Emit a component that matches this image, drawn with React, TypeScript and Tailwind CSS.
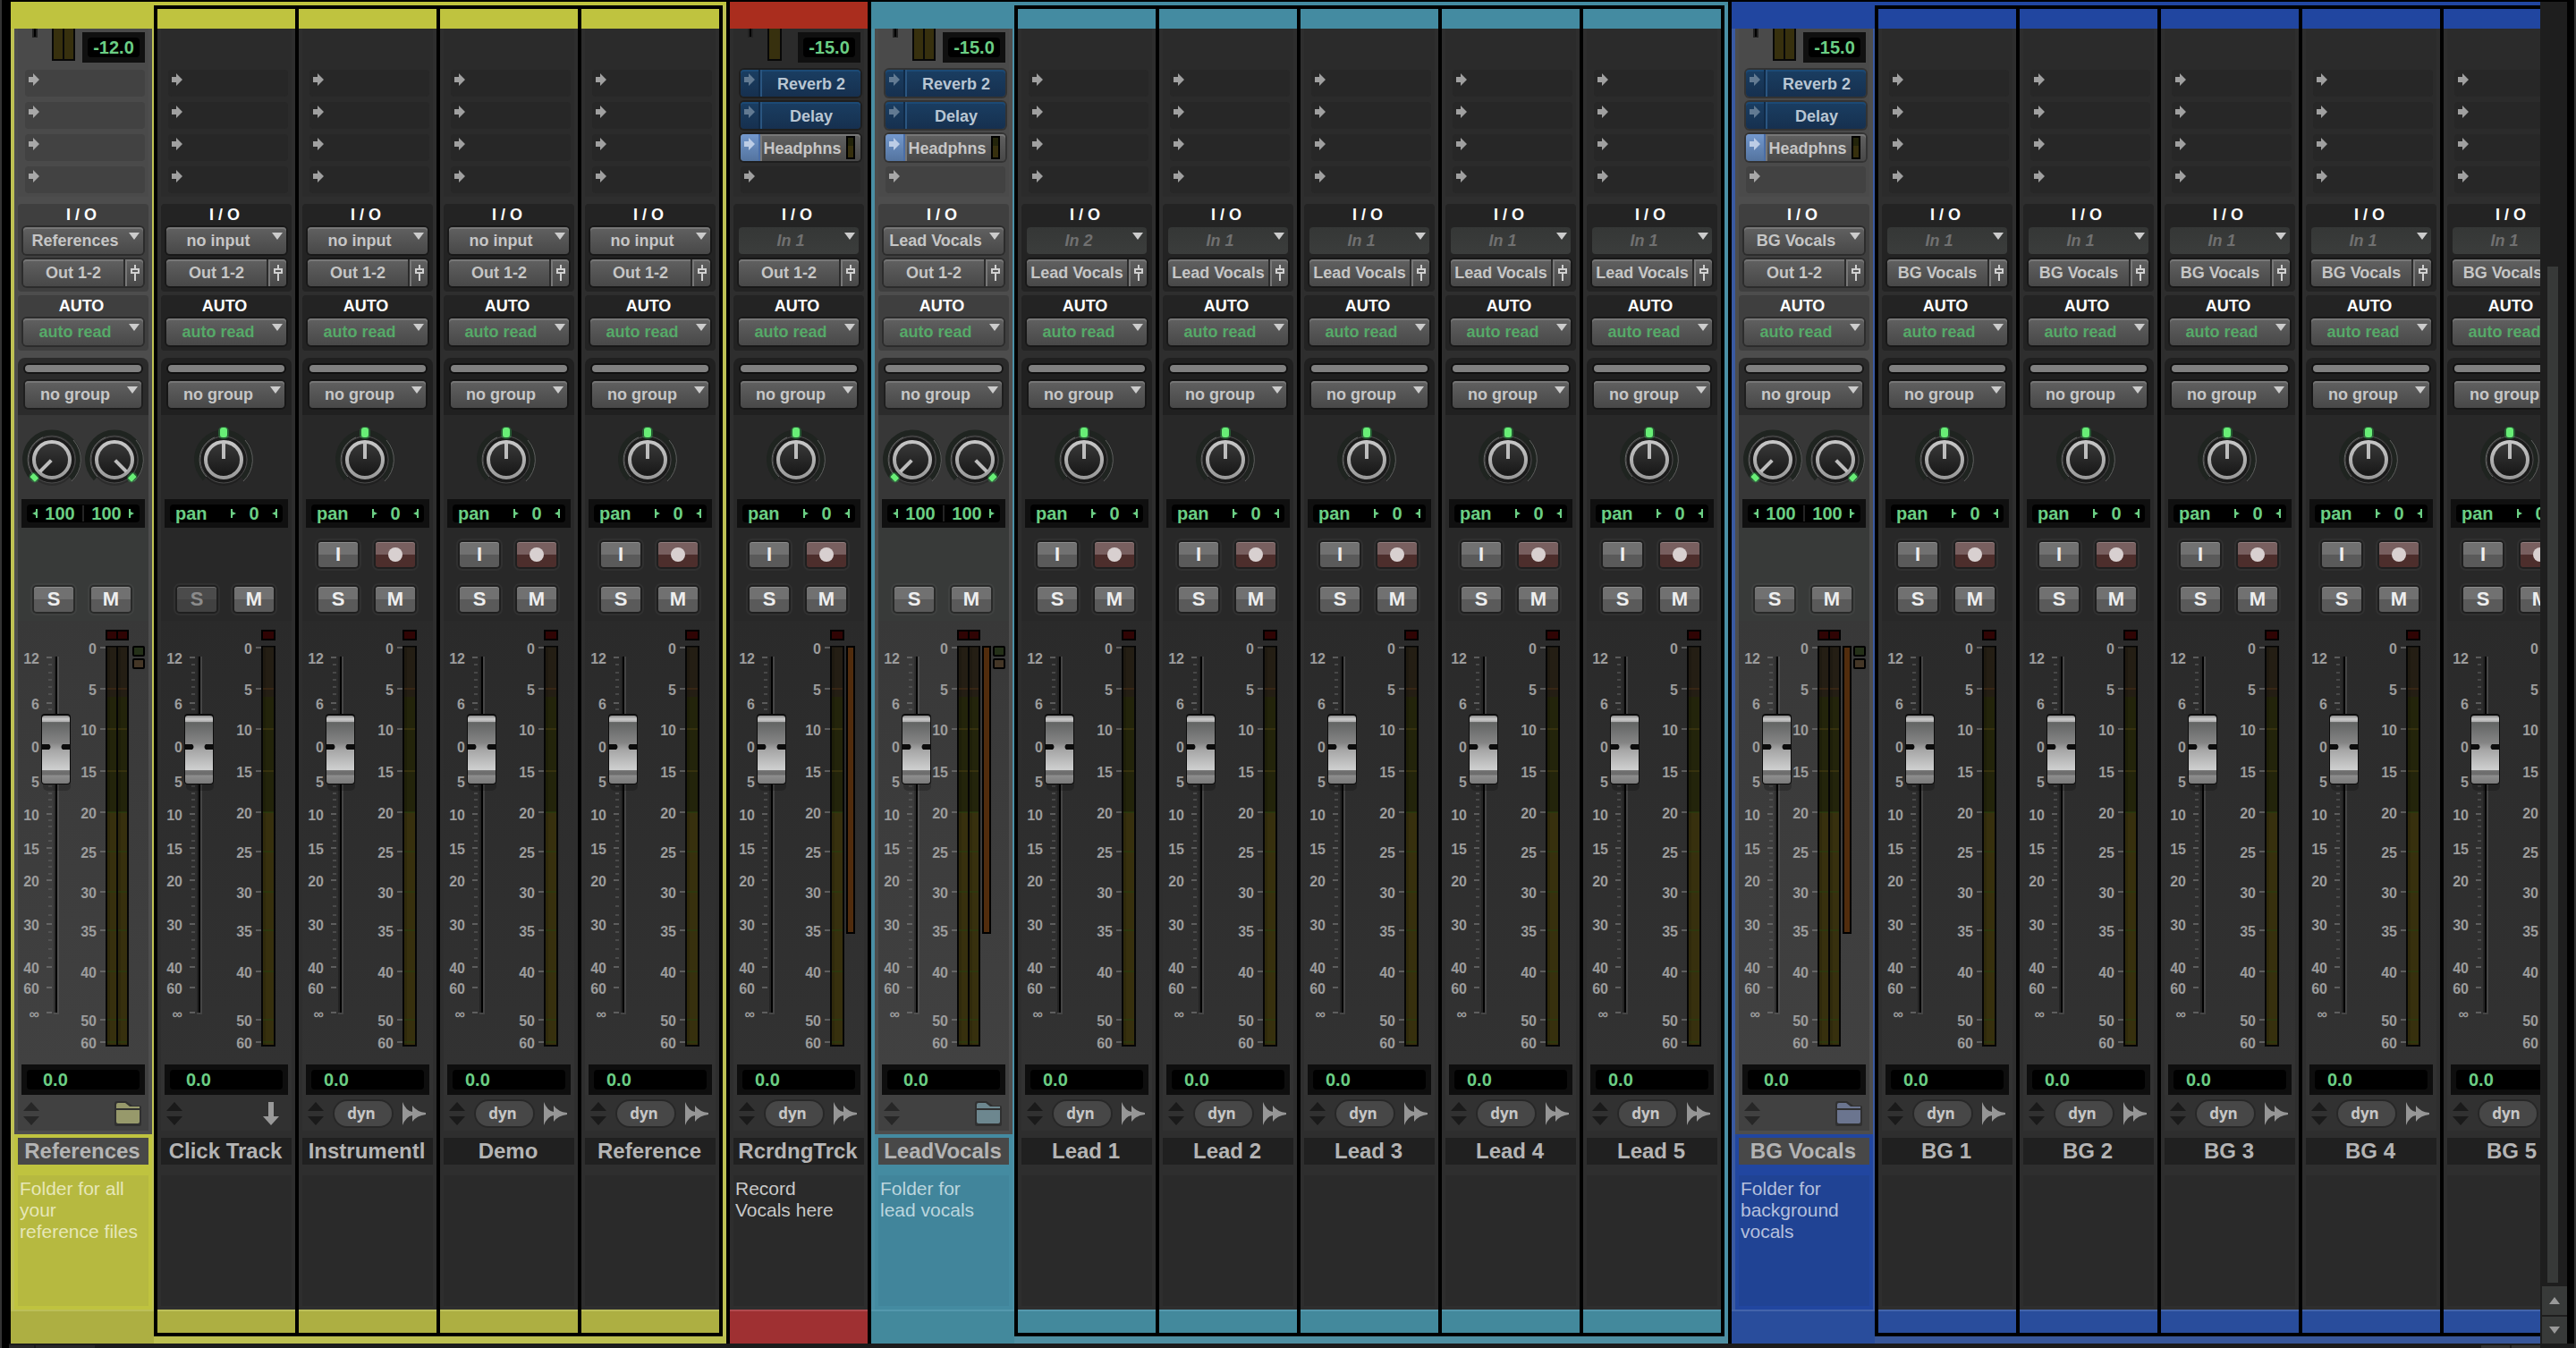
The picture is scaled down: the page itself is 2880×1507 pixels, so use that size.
import React, { useState } from 'react';
import clsx from 'clsx';

type ThemeName = 'yellow' | 'red' | 'teal' | 'blue';

interface Theme {
  main: string;
  side: string;
  bar: string;
  note: string;
  noteText: string;
  base: string;
  icon: string;
}

interface Track {
  name: string;
  input: string;
  output: string;
  kind: 'folder' | 'audio' | 'click';
  level?: string;
  note?: string;
}

interface TrackGroup {
  theme: ThemeName;
  folder: Track;
  tracks: Track[];
}

const THEMES: Record<ThemeName, Theme> = {
  yellow: {
    main: 'bg-[#bfc33f]',
    side: 'bg-[#bfc254]',
    bar: 'border-[#bcbf58] bg-[#adaf42]',
    note: 'bg-[#b6b940]',
    noteText: 'text-[#e6e7b8]',
    base: 'bg-[#bcbf50]',
    icon: 'text-[#97996b]',
  },
  red: {
    main: 'bg-[#aa2d1e]',
    side: 'bg-[#aa2d1e]',
    bar: 'border-[#b04a4e] bg-[#9f3032]',
    note: 'bg-[#2a2a2a]',
    noteText: 'text-[#c8c8c8]',
    base: 'bg-[#9f3032]',
    icon: 'text-[#999999]',
  },
  teal: {
    main: 'bg-[#448ba1]',
    side: 'bg-[#4a8fa5]',
    bar: 'border-[#5498ad] bg-[#43899c]',
    note: 'bg-[#41859b]',
    noteText: 'text-[#bcd6de]',
    base: 'bg-[#4e8fa2]',
    icon: 'text-[#6d878f]',
  },
  blue: {
    main: 'bg-[#2146a0]',
    side: 'bg-[#3a5aa2]',
    bar: 'border-[#4364ab] bg-[#294d9c]',
    note: 'bg-[#204394]',
    noteText: 'text-[#b5c0dd]',
    base: 'bg-[#38579a]',
    icon: 'text-[#6b758f]',
  },
};

const lead = (n: number): Track => ({ name: `Lead ${n}`, input: n === 1 ? 'In 2' : 'In 1', output: 'Lead Vocals', kind: 'audio' });
const bg = (n: number): Track => ({ name: `BG ${n}`, input: 'In 1', output: 'BG Vocals', kind: 'audio' });

const REFERENCES: TrackGroup = {
  theme: 'yellow',
  folder: { name: 'References', input: 'References', output: 'Out 1-2', kind: 'folder', level: '-12.0', note: 'Folder for all your reference files' },
  tracks: [
    { name: 'Click Track', input: 'no input', output: 'Out 1-2', kind: 'click' },
    { name: 'Instrumentl', input: 'no input', output: 'Out 1-2', kind: 'audio' },
    { name: 'Demo', input: 'no input', output: 'Out 1-2', kind: 'audio' },
    { name: 'Reference', input: 'no input', output: 'Out 1-2', kind: 'audio' },
  ],
};

const RECORDING: Track = { name: 'RcrdngTrck', input: 'In 1', output: 'Out 1-2', kind: 'audio', level: '-15.0', note: 'Record Vocals here' };

const LEADS: TrackGroup = {
  theme: 'teal',
  folder: { name: 'LeadVocals', input: 'Lead Vocals', output: 'Out 1-2', kind: 'folder', level: '-15.0', note: 'Folder for lead vocals' },
  tracks: [1, 2, 3, 4, 5].map(lead),
};

const BACKGROUNDS: TrackGroup = {
  theme: 'blue',
  folder: { name: 'BG Vocals', input: 'BG Vocals', output: 'Out 1-2', kind: 'folder', level: '-15.0', note: 'Folder for background vocals' },
  tracks: [1, 2, 3, 4, 5].map(bg),
};

const FADER_SCALE: [string, number][] = [
  ['12', 41], ['6', 92], ['0', 140], ['5', 179], ['10', 216], ['15', 254],
  ['20', 290], ['30', 339], ['40', 387], ['60', 410], ['∞', 438],
];
const FADER_MINOR = [
  49, 58, 66, 74, 82, 99, 107, 116, 124, 132, 148, 156, 164, 172, 185, 193, 200, 208, 223,
  230, 238, 246, 260, 268, 275, 283, 300, 309, 319, 329, 348, 357, 367, 377,
];
const METER_SCALE: [string, number, string][] = [
  ['0', 30, '#241e14'], ['5', 76, '#4d2f17'], ['10', 121, '#4d4012'], ['15', 168, '#4d4012'],
  ['20', 214, '#27400f'], ['25', 258, '#27400f'], ['30', 303, '#27400f'], ['35', 346, '#27400f'],
  ['40', 392, '#27400f'], ['50', 446, '#27400f'], ['60', 471, '#27400f'],
];

const face = 'rounded bg-linear-to-b from-[#616161] to-[#484848] shadow-[0_0_0_2px_rgba(0,0,0,0.3),inset_0_2px_0_#777777]';
const lcd = 'rounded-sm bg-black font-bold text-[20px] leading-[22px] text-[#6bce84]';

const ArrowGlyph: React.FC<{ className?: string }> = ({ className }) => (
  <svg width="12" height="14" viewBox="0 0 12 14" className={className}>
    <path d="M0 4h5V0l7 7-7 7v-4H0z" fill="currentColor" />
  </svg>
);

const Picker: React.FC<{ label: string; value: string; className?: string; muted?: boolean }> = ({ label, value, className, muted }) => (
  <div className="relative h-[30px]">
    <select
      aria-label={label}
      className={clsx(
        'block h-full w-full appearance-none pt-px pr-[18px] text-center text-[18px] font-bold outline-none [text-align-last:center]',
        muted ? 'rounded bg-linear-to-b from-[#353736] to-[#3b3d3c] text-[#707070] italic' : face,
        className,
      )}
    >
      <option>{value}</option>
    </select>
    <svg width="12" height="8" viewBox="0 0 12 8" className="pointer-events-none absolute top-[6px] right-[4px]">
      <path d="M0 0h12L6 8z" fill="#cccccc" />
    </svg>
  </div>
);

const Led: React.FC<{ left?: boolean }> = ({ left }) => (
  <svg width="6" height="10" viewBox="0 0 6 10" className="shrink-0">
    <path d={left ? 'M6 0v10H4V7L0 5l4-2V0z' : 'M0 0v10h2V7l4-2-4-2V0z'} fill="#6bce84" />
  </svg>
);

const Slot: React.FC<{ folder: boolean; send?: string }> = ({ folder, send }) => {
  if (!send) {
    return (
      <button aria-label="Empty send" className={clsx('flex h-[30px] w-full rounded pt-1 pl-1', folder ? 'bg-[#424242] text-[#a8a8a8]' : 'bg-[#272727] text-[#a0a0a0]')}>
        <ArrowGlyph />
      </button>
    );
  }
  const active = send === 'Headphns';
  return (
    <div
      className={clsx(
        'flex h-[30px] overflow-hidden',
        active ? face : 'rounded bg-linear-to-b from-[#1a3e62] to-[#16304f] shadow-[0_0_0_2px_rgba(0,0,0,0.3),inset_0_2px_0_#1c4a75]',
      )}
    >
      <button
        aria-label={`${send} send assignment`}
        className={clsx('flex w-[22px] border-r-2 pt-1 pl-1', active ? 'border-[#4a6ea8] bg-linear-to-b from-[#7398cd] to-[#54749f] text-[#bdcde6]' : 'border-[#102a47] text-[#627a92]')}
      >
        <ArrowGlyph className="shrink-0" />
      </button>
      <button className={clsx('flex-1 border-l-2 text-[18px] leading-8 font-bold', active ? 'border-[#777777] text-[#c6c6c6]' : 'border-[#2a5580] text-[#b9c6d3]')}>
        {send}
      </button>
      {active && (
        <span className="my-[2px] mr-[6px] ml-1 w-[10px] border-2 border-black bg-linear-to-b from-[#23240b] from-40% to-[#37300e] to-40%" />
      )}
    </div>
  );
};

const SendSection: React.FC<{ track: Track }> = ({ track }) => {
  const folder = track.kind === 'folder';
  const sends = track.level && track.level !== '-12.0' ? ['Reverb 2', 'Delay', 'Headphns', undefined] : [undefined, undefined, undefined, undefined];
  return (
    <div className={clsx('pr-1 pb-1 pl-2', folder ? 'bg-[#4a4a4a]' : 'bg-[#2b2b2b]')}>
      <div className="flex h-[46px] items-start justify-between">
        {track.level && (
          <>
            <svg width="64" height="36" viewBox="0 0 64 36" className="shrink-0">
              <path d="M8 0h6v10H8z" fill="#222222" />
              <path d="M10 0h2v9h-2z" fill="#000000" />
              <path d={folder ? 'M30 0h26v36H30z' : 'M30 0h16v36H30z'} fill="#080808" />
              <path d={folder ? 'M32 0h10v34H32zM44 0h10v34H44z' : 'M32 0h12v34H32z'} fill="#37300e" />
            </svg>
            <div className="mt-1 h-[34px] w-[70px] shrink-0 bg-[#101010] p-[6px]">
              <output className={clsx(lcd, 'block text-center')}>{track.level}</output>
            </div>
          </>
        )}
      </div>
      <div className="flex flex-col gap-[6px]">
        {sends.map((send, i) => (
          <Slot key={i} folder={folder} send={send} />
        ))}
      </div>
    </div>
  );
};

const IoSection: React.FC<{ track: Track }> = ({ track }) => {
  const panel = clsx('rounded px-[6px] pb-[6px]', track.kind === 'folder' ? 'bg-[#3f3f3f]' : 'bg-[#232323]');
  const disabled = track.input.startsWith('In');
  return (
    <>
      <div className={clsx(panel, 'mt-2')}>
        <h3 className="h-[26px] pr-1 text-center text-[18px] leading-6 font-bold text-white">I / O</h3>
        <Picker label={`${track.name} input`} value={track.input} muted={disabled} className={disabled ? '' : 'text-[#c6c6c6]'} />
        <div className={clsx(face, 'mt-[6px] flex h-[30px] overflow-hidden')}>
          <select
            aria-label={`${track.name} output`}
            defaultValue={track.output}
            className="min-w-0 flex-1 appearance-none border-r-2 border-[#2b2b2b] pt-px text-center text-[18px] font-bold text-[#c6c6c6] outline-none [text-align-last:center]"
          >
            <option>{track.output}</option>
          </select>
          <button aria-label={`${track.name} output window`} className="w-5 border-l-2 border-[#777777] pl-[4px]">
            <svg width="10" height="18" viewBox="0 0 10 18" fill="none" stroke="#d0d0d0" strokeWidth="2">
              <path d="M5 0v4M5 10v8M1 5h8v4H1z" />
            </svg>
          </button>
        </div>
      </div>
      <div className={clsx(panel, 'mt-1')}>
        <h3 className="h-[26px] pr-1 text-center text-[18px] leading-6 font-bold text-white">AUTO</h3>
        <Picker label={`${track.name} automation`} value="auto read" className="text-[#56a968]" />
      </div>
    </>
  );
};

const Knob: React.FC<{ cx: number; angle: number }> = ({ cx, angle }) => (
  <g>
    <circle cx={cx} cy="53" r="26" fill="#000000" opacity="0.2" />
    <path d={`M${cx - 21} 71a30 30 0 1 1 42 0`} fill="none" stroke="#1f2420" strokeWidth="6" />
    <path d={`M${cx - 19} 69a27 27 0 0 1 9 -44`} fill="none" stroke="#6a6a6a" strokeWidth="1" />
    <path d={`M${cx + 24} 28a33 33 0 0 1 -2 46`} fill="none" stroke="#606060" strokeWidth="1" />
    <circle cx={cx} cy="50" r="26" fill="#1b1b1b" stroke="#4c4c4c" strokeWidth="1" />
    <circle cx={cx} cy="50" r="20" fill="url(#knob-face)" stroke="url(#knob-ring)" strokeWidth="4" />
    <g transform={`rotate(${angle} ${cx} 50)`}>
      <path d={`M${cx} 49V31`} stroke="#bdbdbd" strokeWidth="4" />
      <rect x={cx - 6} y={angle ? 17 : 13} width="12" height={angle ? 10 : 14} rx="5" fill="#36d65c" opacity="0.3" />
      <rect x={cx - 4} y={angle ? 19 : 14} width="8" height={angle ? 6 : 11} rx={angle ? 1 : 3} fill="#68ee76" />
    </g>
  </g>
);

const PanSection: React.FC<{ track: Track }> = ({ track }) => {
  const folder = track.kind === 'folder';
  return (
    <>
      <div className={clsx('mt-2 rounded-t-lg px-2 py-2', folder ? 'bg-[#2b2b2b]' : 'bg-[#202020]')}>
        <div className="h-2 rounded-sm bg-[#808080] shadow-[0_0_0_2px_rgba(0,0,0,0.5)]" />
        <div className="mt-[10px]">
          <Picker label={`${track.name} group`} value="no group" className="text-[#c6c6c6]" />
        </div>
      </div>
      <div className={clsx('relative', folder ? 'bg-[#373737]' : 'bg-[#282828]')}>
        <svg viewBox="0 0 146 94" className="h-[94px] w-full">
          {folder ? (
            <>
              <Knob cx={38} angle={-135} />
              <Knob cx={108} angle={135} />
            </>
          ) : (
            <Knob cx={70} angle={0} />
          )}
        </svg>
        <input type="range" aria-label={`${track.name} pan`} min="-100" max="100" className="absolute inset-0 h-full w-full cursor-pointer opacity-0" />
      </div>
      <div className={clsx(folder ? 'bg-[#373737]' : 'bg-[#282828]')}>
        <div className="mx-1 h-8 bg-[#101010] p-[6px]">
          {folder ? (
            <div className={clsx(lcd, 'flex h-5 items-center justify-between px-[6px]')}>
              <Led left />
              <span>100</span>
              <span className="h-[18px] w-[2px] bg-[#242424]" />
              <span>100</span>
              <Led />
            </div>
          ) : (
            <div className={clsx(lcd, 'flex h-5 items-center px-[6px]')}>
              <span className="flex-1">pan</span>
              <Led />
              <span className="w-10 text-center">0</span>
              <Led left />
            </div>
          )}
        </div>
      </div>
    </>
  );
};

const padButton =
  'h-7 w-11 rounded-[3px] bg-linear-to-b text-[22px] leading-7 font-bold shadow-[0_0_0_2px_rgba(0,0,0,0.35),0_0_0_4px_rgba(255,255,255,0.04),inset_0_1px_0_rgba(255,255,255,0.2)]';
const grayPad = 'from-[#717171] from-50% to-[#5a5a5a] to-50% text-[#eeeeee]';

const ButtonSection: React.FC<{ track: Track }> = ({ track }) => {
  const [solo, setSolo] = useState(false);
  const [mute, setMute] = useState(false);
  const folder = track.kind === 'folder';
  const click = track.kind === 'click';
  return (
    <div className={clsx('grid grid-cols-[44px_44px] justify-start gap-x-5 gap-y-[22px] pt-4 pb-[10px] pl-[18px]', folder ? 'bg-[#383a39]' : 'bg-[#282828]')}>
      {track.kind === 'audio' ? (
        <>
          <button aria-label={`${track.name} input monitor`} className={clsx(padButton, grayPad)}>I</button>
          <button aria-label={`${track.name} record enable`} className={clsx(padButton, 'flex items-center justify-center from-[#785f5f] from-50% to-[#4d2e2c] to-50%')}>
            <span className="size-4 rounded-full bg-[#d8d0d0]" />
          </button>
        </>
      ) : (
        <div className="col-span-2 h-7" />
      )}
      <button
        aria-pressed={solo}
        onClick={() => setSolo(!solo)}
        className={clsx(padButton, click ? 'from-[#4b4b4b] from-50% to-[#414141] to-50% text-[#8b8b8b]' : grayPad)}
      >
        S
      </button>
      <button aria-pressed={mute} onClick={() => setMute(!mute)} className={clsx(padButton, grayPad)}>M</button>
    </div>
  );
};

const FaderSection: React.FC<{ track: Track }> = ({ track }) => {
  const folder = track.kind === 'folder';
  const reduction = track.level === '-15.0';
  // left edge of the meter column, in section coordinates
  const mx = folder ? (reduction ? 88 : 98) : reduction ? 108 : 112;
  const bars = folder ? [mx + 2, mx + 14] : [mx + 2];
  const barWidth = folder ? 10 : 12;
  const grx = folder ? mx + 28 : mx + 18;
  return (
    <div className={clsx('relative bg-linear-to-b', folder ? 'from-[#383838] to-[#414141]' : 'from-[#2a2a2a] to-[#323232]')}>
      <svg viewBox="0 0 146 496" className="h-[496px] w-full text-[16px] font-bold">
        {FADER_SCALE.map(([label, y]) => (
          <g key={label}>
            <text x="24" y={y + 7} textAnchor="end" fill="#9c9c9c">{label}</text>
            <path d={`M32 ${y}h6`} stroke="#8c8c8c" />
          </g>
        ))}
        {FADER_MINOR.map((y) => (
          <path key={y} d={`M34 ${y}h4`} stroke="#666666" />
        ))}
        <rect x="40" y="40" width="6" height="400" fill={folder ? '#505050' : '#454545'} />
        <rect x="40" y="40" width="2" height="398" fill={folder ? '#303030' : '#242424'} />
        <rect x="42" y="40" width="2" height="398" fill="#000000" />

        <rect x={mx} y="10" width={folder ? 26 : 16} height="12" fill="#000000" />
        <rect x={mx} y="28" width={folder ? 26 : 16} height="448" fill="#050505" />
        {bars.map((x) => (
          <g key={x}>
            <rect x={x} y="12" width={barWidth} height="8" fill="#300404" />
            <rect x={x} y="30" width={barWidth} height="55" fill="#241e14" />
            <rect x={x} y="85" width={barWidth} height="129" fill="#23240b" />
            <rect x={x} y="214" width={barWidth} height="260" fill="#37300e" />
            <rect x={x} y="30" width="3" height="444" fill="#000000" opacity="0.12" />
          </g>
        ))}
        {METER_SCALE.map(([label, y, color]) => (
          <g key={label}>
            <text x={mx - 10} y={y + 7} textAnchor="end" fill="#9c9c9c">{label}</text>
            <path d={`M${mx - 6} ${y}h6`} stroke="#8c8c8c" />
            {bars.map((x) => (
              <path key={x} d={`M${x} ${y}h${barWidth}`} stroke={color} />
            ))}
          </g>
        ))}
        {reduction && (
          <>
            <rect x={grx} y="28" width="10" height="322" fill="#000000" />
            <rect x={grx + 2} y="30" width="6" height="318" fill="#512c0d" />
          </>
        )}
        {folder && (
          <>
            <rect x="129" y="29" width="12" height="10" rx="1" fill="#243018" stroke="#000000" strokeWidth="2" />
            <rect x="129" y="43" width="12" height="10" rx="1" fill="#443626" stroke="#000000" strokeWidth="2" />
          </>
        )}

        <rect x="28" y="112" width="31" height="78" rx="5" fill="#000000" opacity="0.2" />
        <rect x="26" y="104" width="33" height="79" rx="4" fill="#0c0c0c" />
        <rect x="27" y="106" width="31" height="76" rx="3" fill="url(#cap)" />
        <path d="M26 138h9q3 3 0 6h-9zM59 138h-9q-3 3 0 6h9z" fill="#0c0c0c" />
      </svg>
      <input
        type="range"
        aria-label={`${track.name} volume`}
        className="absolute top-10 left-7 h-[400px] w-8 cursor-pointer opacity-0 [writing-mode:vertical-lr]"
      />
    </div>
  );
};

const FooterIcons: React.FC<{ track: Track; theme: Theme }> = ({ track, theme }) => {
  const folder = track.kind === 'folder';
  return (
    <div className={clsx('flex h-10 items-center pt-[2px] pr-2 pl-[6px]', folder ? 'bg-[#414141]' : 'bg-[#313131]')}>
      <button aria-label={`${track.name} track height`}>
        <svg width="18" height="26" viewBox="0 0 18 26" fill={folder ? '#272727' : '#1a1a1a'}>
          <path d="M9 0l9 10H0zM9 26l9-10H0z" />
        </svg>
      </button>
      {track.kind === 'audio' && (
        <button className="ml-3 h-7 w-16 rounded-full bg-[#474747] pr-1 font-['Open_Sans',sans-serif] text-[17px] leading-6 font-bold text-[#c6c6c6] shadow-[0_0_0_2px_rgba(0,0,0,0.2)]">
          dyn
        </button>
      )}
      <span className="ml-auto">
        {folder && (
          <svg width="30" height="28" viewBox="0 0 30 28" className={clsx('block', theme.icon)} fill="currentColor">
            <path d="M0 3q0-3 3-3h10l7 5h9q1 0 1 3v18q0 2-2 2H2q-2 0-2-2z" fill="#000000" opacity="0.25" />
            <path d="M2 4q0-2 2-2h8l5 4h11v2H2zM2 10h26v13q0 2-2 2H4q-2 0-2-2z" />
          </svg>
        )}
        {track.kind === 'click' && (
          <svg width="26" height="26" viewBox="0 0 26 26" className="block">
            <path d="M8 0h6v16h6l-9 10-9-10h6z" fill="#999999" />
          </svg>
        )}
        {track.kind === 'audio' && (
          <svg width="26" height="26" viewBox="0 0 26 26" className="block">
            <path d="M0 0q4 10 11 11V4q5 7 15 8v2q-10 1-15 8v-7q-7 1-11 11z" fill="#969696" />
          </svg>
        )}
      </span>
    </div>
  );
};

const Strip: React.FC<{ track: Track; themeName: ThemeName }> = ({ track, themeName }) => {
  const theme = THEMES[themeName];
  const folder = track.kind === 'folder';
  const inset = track.kind !== 'audio';
  return (
    <article className={clsx('flex shrink-0 flex-col', folder ? `w-[160px] ${theme.side}` : 'w-[154px] bg-[#2e2e2e]')}>
      {/* Colour header */}
      <div className={clsx(theme.main, folder || themeName === 'red' ? 'h-[30px]' : 'h-[22px]')} />

      <div className={clsx('flex flex-1 flex-col', folder && `mr-[2px] ml-1 ${theme.main}`)}>
        <div className={clsx('px-1 pb-1', folder ? 'bg-[#4d4d4d]' : 'bg-[#2e2e2e]')}>
          <SendSection track={track} />
          <IoSection track={track} />
          <PanSection track={track} />
          <ButtonSection track={track} />
          <FaderSection track={track} />
          <div className={folder ? 'bg-[#414141]' : 'bg-[#323232]'}>
            <div className="mx-1 h-[34px] bg-[#0e0e0e] p-[6px]">
              <output className={clsx(lcd, 'block h-[22px]', inset ? 'pl-[18px]' : 'pl-[14px]')}>0.0</output>
            </div>
          </div>
          <FooterIcons track={track} theme={theme} />
        </div>

        <button
          className={clsx(
            'mx-1 mt-1 h-[30px] overflow-hidden pr-[2px] text-center text-[24px] leading-[30px] font-bold whitespace-nowrap text-[#b4b4b4]',
            folder ? 'bg-[#484848]' : 'bg-[#202020]',
          )}
        >
          {track.name}
        </button>
        <textarea
          aria-label={`${track.name} comments`}
          defaultValue={track.note}
          className={clsx(
            'mx-1 mt-3 mb-1 block flex-1 resize-none overflow-hidden pt-[3px] pr-[10px] pl-[2px] text-[21px] leading-6 outline-none',
            folder ? `${theme.note} ${theme.noteText}` : 'bg-[#2a2a2a] text-[#c8c8c8]',
          )}
        />
      </div>

      <div className={clsx('border-t-2', theme.bar, folder || themeName === 'red' ? 'h-[38px]' : 'h-[26px]')} />
    </article>
  );
};

const Group: React.FC<{ group: TrackGroup }> = ({ group }) => {
  const theme = THEMES[group.theme];
  return (
    <section className={clsx('flex shrink-0', theme.side)}>
      <Strip track={group.folder} themeName={group.theme} />
      <div className="flex flex-col">
        <div className={clsx('h-1', theme.main)} />
        <div className="mr-1 flex flex-1 gap-1 border-4 border-black bg-black">
          {group.tracks.map((track) => (
            <Strip key={track.name} track={track} themeName={group.theme} />
          ))}
        </div>
        <div className={clsx('h-2', theme.base)} />
      </div>
    </section>
  );
};

const ScrollColumn: React.FC = () => (
  <div className="flex w-[30px] shrink-0 flex-col gap-[2px] bg-[#1e1e1e] pl-[2px]">
    <div className="flex flex-1 justify-center pb-[2px]">
      <div className="mt-[296px] mr-1 w-3 bg-[#373938]" />
    </div>
    <button aria-label="Scroll up" className="flex h-8 items-center justify-center bg-[#383a39]">
      <svg width="12" height="8" viewBox="0 0 12 8"><path d="M6 0l6 8H0z" fill="#999999" /></svg>
    </button>
    <button aria-label="Scroll down" className="flex h-[30px] items-center justify-center bg-[#383a39]">
      <svg width="12" height="8" viewBox="0 0 12 8"><path d="M6 8l6-8H0z" fill="#999999" /></svg>
    </button>
  </div>
);

const App: React.FC = () => (
  <main className="flex min-h-screen flex-col overflow-hidden border-x-2 border-[#343434] bg-black pt-[2px] font-['Liberation_Sans',Arial,sans-serif]">
    {/* Shared gradients for the knobs and fader caps */}
    <svg width="0" height="0" className="absolute">
      <defs>
        <linearGradient id="knob-face" x1="0" y1="0" x2="0" y2="1">
          <stop offset="0" stopColor="#3a3a3a" />
          <stop offset="1" stopColor="#151515" />
        </linearGradient>
        <linearGradient id="knob-ring" x1="0" y1="0" x2="0" y2="1">
          <stop offset="0" stopColor="#c6c6c6" />
          <stop offset="1" stopColor="#9a9a9a" />
        </linearGradient>
        <linearGradient id="cap" x1="0" y1="0" x2="0" y2="1">
          <stop offset="0" stopColor="#8a8a8a" />
          <stop offset="0.05" stopColor="#c8c8c8" />
          <stop offset="0.09" stopColor="#b0b0b0" />
          <stop offset="0.1" stopColor="#626463" />
          <stop offset="0.4" stopColor="#858585" />
          <stop offset="0.5" stopColor="#a5a5a5" />
          <stop offset="0.8" stopColor="#cfd0d0" />
          <stop offset="0.81" stopColor="#707070" />
          <stop offset="0.87" stopColor="#6c6c6c" />
          <stop offset="0.88" stopColor="#8e8e8e" />
          <stop offset="1" stopColor="#7a7a7a" />
        </linearGradient>
      </defs>
    </svg>

    <div className="flex flex-1 pr-2 pl-[10px]">
      <div className="flex min-w-0 flex-1 gap-1 overflow-hidden">
        <Group group={REFERENCES} />
        <Strip track={RECORDING} themeName="red" />
        <Group group={LEADS} />
        <Group group={BACKGROUNDS} />
      </div>
      <ScrollColumn />
    </div>
    <div className="ml-2 flex h-[5px] items-end gap-[2px] bg-[#1c1c1c] pr-[38px]">
      <div className="h-[3px] w-7 bg-[#292929]" />
      <div className="h-[3px] w-[66px] bg-[#292929]" />
      <div className="ml-auto h-[3px] w-8 bg-[#333333]" />
      <div className="h-[3px] w-8 bg-[#333333]" />
    </div>
  </main>
);

export default App;
